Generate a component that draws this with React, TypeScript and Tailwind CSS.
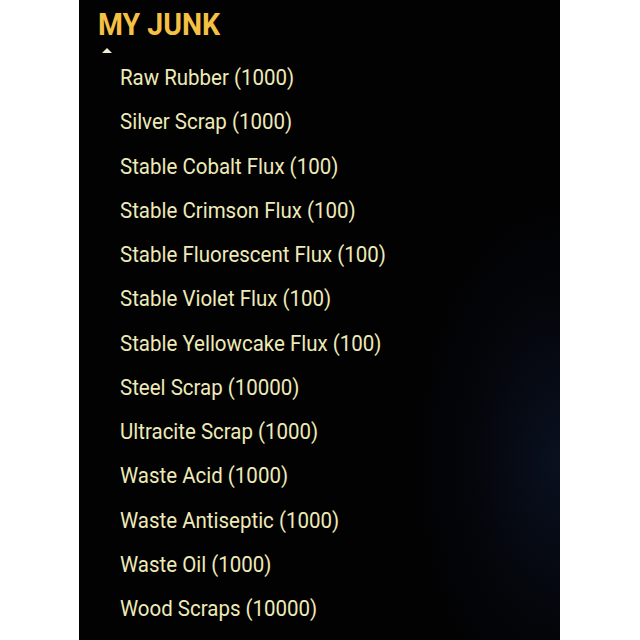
import { type ReactElement } from 'react';

const JUNK_ITEMS: string[] = [
  'Raw Rubber (1000)',
  'Silver Scrap (1000)',
  'Stable Cobalt Flux (100)',
  'Stable Crimson Flux (100)',
  'Stable Fluorescent Flux (100)',
  'Stable Violet Flux (100)',
  'Stable Yellowcake Flux (100)',
  'Steel Scrap (10000)',
  'Ultracite Scrap (1000)',
  'Waste Acid (1000)',
  'Waste Antiseptic (1000)',
  'Waste Oil (1000)',
  'Wood Scraps (10000)',
];

/** Inventory panel listing junk stacks, game-HUD style. */
export default function App(): ReactElement {
  return (
    <div className="flex h-[640px] w-[640px] bg-white">
      <section className="ml-[79px] h-full w-[481px] overflow-hidden bg-[radial-gradient(ellipse_30%_40%_at_100%_72%,#0a1020_0%,#04060b_60%,#020203_100%)] font-['Roboto',sans-serif]">
        <h1 className="ml-[19px] mt-[8px] origin-left scale-x-[0.89] text-[32px] font-bold leading-none text-[#f5c144]">
          MY JUNK
        </h1>
        <div className="ml-[23px] mt-[8px] h-0 w-0 border-x-[5.5px] border-b-[5px] border-x-transparent border-b-[#f1eed0]" />
        <ul className="mt-[2px] pl-[41px]">
          {JUNK_ITEMS.map((item) => (
            <li
              key={item}
              className="origin-left scale-x-[0.91] whitespace-nowrap text-[22.5px] leading-[44.25px] text-[#eeeab8]"
            >
              {item}
            </li>
          ))}
        </ul>
      </section>
    </div>
  );
}
